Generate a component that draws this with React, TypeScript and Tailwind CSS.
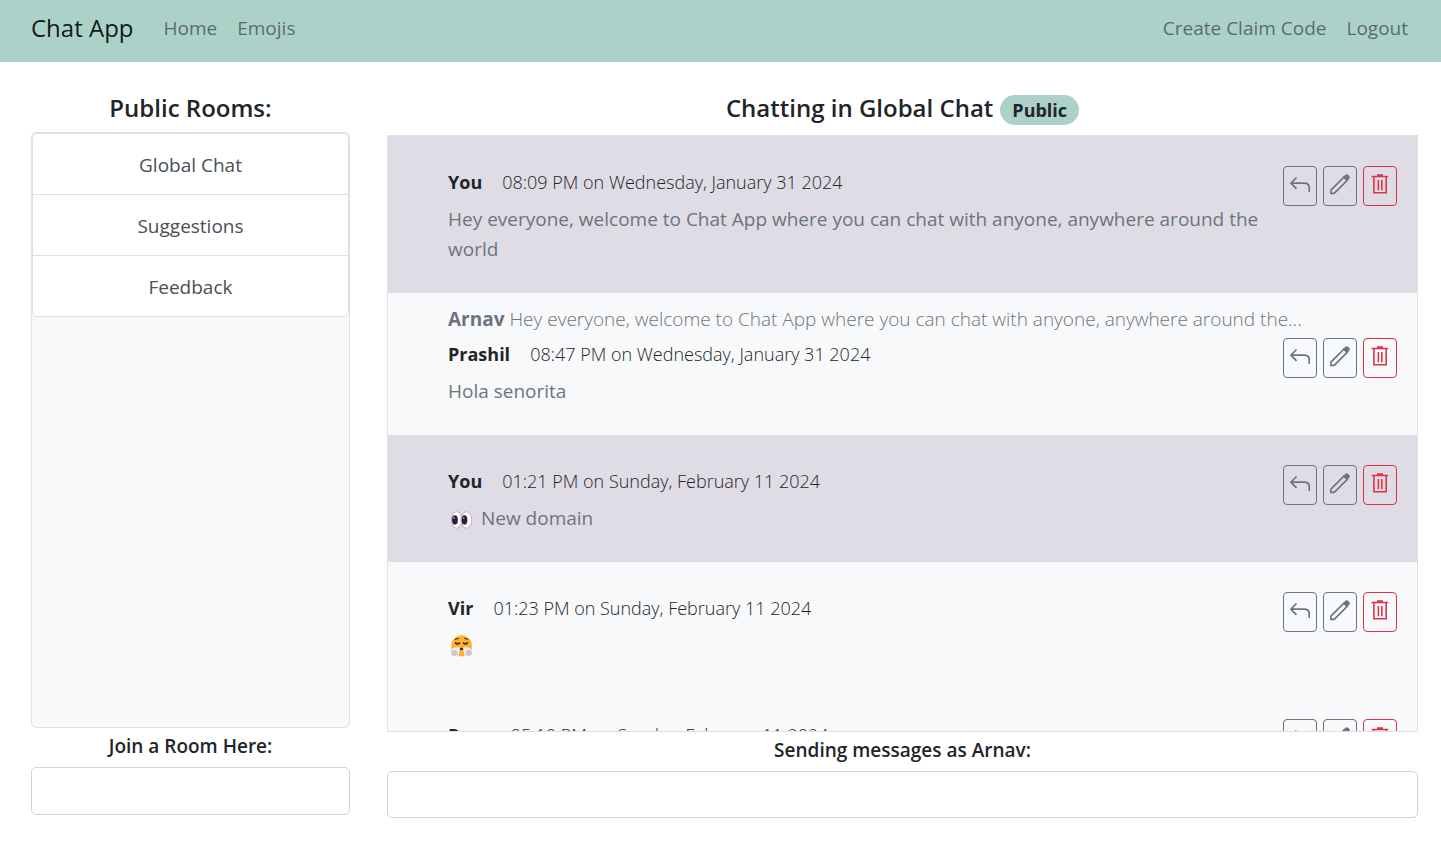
import { ReactNode } from "react";

type Message = {
  id: number;
  author: string;
  time: string;
  body: ReactNode;
  own?: boolean;
  reply?: { author: string; text: string };
};

function EyesEmoji() {
  return (
    <svg viewBox="0 0 24 24" className="mr-0.5 inline-block size-[26px] align-[-8px]" role="img" aria-label="eyes">
      <g fill="#fff" stroke="#b9b6bd" strokeWidth="1">
        <ellipse cx="8" cy="12" rx="4.900" ry="7.600" />
        <ellipse cx="17" cy="12" rx="5" ry="7.600" />
      </g>
      <ellipse cx="6.400" cy="12" rx="2.700" ry="4.300" fill="#321b41" />
      <ellipse cx="15.200" cy="12" rx="2.700" ry="4.300" fill="#321b41" />
      <circle cx="5.600" cy="10" r="0.800" fill="#b9a9cc" />
      <circle cx="14.400" cy="10" r="0.800" fill="#b9a9cc" />
    </svg>
  );
}

function HuffEmoji() {
  return (
    <svg viewBox="0 0 24 24" className="inline-block size-[26px] align-[-7px]" role="img" aria-label="face with steam from nose">
      <path d="M3 11.500a9.500 9.500 0 0 1 19 0v4c0 4-4 6-9.500 6S3 19.500 3 15.500z" fill="#ffb02e" />
      <g fill="none" stroke="#402a32" strokeWidth="1" strokeLinecap="round">
        <path d="M6.800 6.200c1-.9 2-1.200 3-1.100M15.200 5.100c1-.1 2 .2 3 1.100" />
        <path d="M7 9.200c1.200 1 2.400 1 3.600.2M14.400 9.400c1.200.8 2.400.8 3.600-.2" strokeWidth="1.600" />
      </g>
      <path d="M10.800 15.200q1.700-2 3.400 0z" fill="#402a32" stroke="#402a32" />
      <path d="M11 13.500C8 12.800 3 13 3 16.500c-.5 4 1.500 5.500 4 5 3 .3 3.500-1.500 3-3 1-1.500 1-3 1-5z" fill="#ededed" />
      <path d="M14 13.500c3-.7 8-.5 8 3 .5 4-1.500 5.500-4 5-3 .3-3.500-1.500-3-3-1-1.500-1-3-1-5z" fill="#ededed" />
      <circle cx="5.800" cy="18.500" r="2.800" fill="#c9c9c9" />
      <circle cx="19.200" cy="18.500" r="2.800" fill="#c9c9c9" />
    </svg>
  );
}

function ReplyIcon() {
  return (
    <svg viewBox="0 0 20 20" className="size-5" fill="none" stroke="currentColor" strokeWidth="1.700" aria-hidden="true">
      <path d="M6.500 2.500.900 8.200l5.600 5.600M.900 8.200h13.400q5 0 5 5V17" />
    </svg>
  );
}

function PencilIcon() {
  return (
    <svg viewBox="0 0 20 20" className="size-5 overflow-visible" aria-hidden="true">
      <path d="M.900 15.100 13.900 2.100l3.300 3.300-13 13H.900z" fill="none" stroke="currentColor" strokeWidth="1.600" />
      <path d="M13.500 2.100 15.500.2q1.500-1.100 3 .3t.4 3L17 5.600z" fill="currentColor" stroke="currentColor" />
    </svg>
  );
}

function TrashIcon() {
  return (
    <svg viewBox="0 0 20 20" className="size-5 overflow-visible" fill="none" stroke="currentColor" strokeWidth="1.600" aria-hidden="true">
      <path d="M1.600 1.500h16.600M7 .1h6M3.900 1.500v16.200h12.300V1.500M8.400 5v10.200M11.800 5v10.200" />
    </svg>
  );
}

const rooms = ["Global Chat", "Suggestions", "Feedback"];

const greeting = "Hey everyone, welcome to Chat App where you can chat with anyone, anywhere around the";

const messages: Message[] = [
  { id: 1, author: "You", time: "08:09 PM on Wednesday, January 31 2024", body: `${greeting} world`, own: true },
  {
    id: 2,
    author: "Prashil",
    time: "08:47 PM on Wednesday, January 31 2024",
    body: "Hola senorita",
    reply: { author: "Arnav", text: `${greeting}...` },
  },
  { id: 3, author: "You", time: "01:21 PM on Sunday, February 11 2024", body: <><EyesEmoji />{" "}New domain</>, own: true },
  { id: 4, author: "Vir", time: "01:23 PM on Sunday, February 11 2024", body: <HuffEmoji /> },
  { id: 5, author: "Rose", time: "05:10 PM on Sunday, February 11 2024", body: "Hello" },
];

const actionClass = "flex h-10 w-[34px] justify-center rounded border pt-2";

function MessageRow({ message }: { message: Message }) {
  const { author, time, body, own, reply } = message;
  return (
    <li className={`pr-5 pl-[60px] ${reply ? "pt-[11px]" : "pt-[30px]"} pb-[29px] ${own ? "bg-[#dfdce5]" : "bg-[#f8f9fa]"}`}>
      {reply && (
        <p className="mb-1 font-light whitespace-nowrap text-[#6c757d]">
          <b className="font-bold">{reply.author}</b> {reply.text}
        </p>
      )}
      <div className="flex items-start justify-between gap-6">
        <div className="min-w-0 pt-px">
          <p className="text-[18px] font-light">
            <b className="mr-5 font-bold">{author}</b>
            {time}
          </p>
          <p className="mt-[7px] min-h-[30px] text-[#6c757d]">{body}</p>
        </div>
        <div className="flex shrink-0 gap-1.5 text-[#6c757d]">
          <button type="button" aria-label="Reply" className={`${actionClass} border-[#6c757d]`}><ReplyIcon /></button>
          <button type="button" aria-label="Edit" className={`${actionClass} border-[#6c757d]`}><PencilIcon /></button>
          <button type="button" aria-label="Delete" className={`${actionClass} border-[#dc3545] text-[#dc3545]`}><TrashIcon /></button>
        </div>
      </div>
    </li>
  );
}

export default function App() {
  return (
    <div className="flex h-screen flex-col bg-white font-['Open_Sans','Noto_Sans',sans-serif] text-[19px] leading-[30px] text-[#212529]">
      <nav className="flex h-[62px] shrink-0 items-center bg-[#acd1c8] pr-[33px] pb-1.5 pl-[31px] text-black/50">
        <a href="#" className="mr-[30px] text-[24px] text-black/90">Chat App</a>
        <div className="flex flex-1 gap-5">
          <a href="#home">Home</a>
          <a href="#emojis">Emojis</a>
        </div>
        <div className="flex gap-5">
          <a href="#claim">Create Claim Code</a>
          <a href="#logout">Logout</a>
        </div>
      </nav>

      <main className="grid min-h-0 flex-1 grid-cols-[319fr_1031fr] gap-[37px] pt-7 pr-[23px] pb-[23px] pl-[31px]">
        <section className="flex min-h-0 flex-col pb-[3px]">
          <h2 className="mb-1.5 text-center text-[24px] leading-9 font-semibold">Public Rooms:</h2>
          <div className="min-h-0 flex-1 overflow-hidden rounded-[5px] border border-[#dee2e6] bg-[#f8f9fa]">
            <ul className="divide-y divide-[#dfdfdf] overflow-hidden rounded-[5px] border border-[#dfdfdf] bg-white text-center text-[#495057]">
              {rooms.map((room) => (
                <li key={room}>
                  <button type="button" className="h-[60px] w-full pt-0.5">{room}</button>
                </li>
              ))}
            </ul>
          </div>
          <label htmlFor="room" className="mt-[3px] mb-1.5 text-center font-semibold">Join a Room Here:</label>
          <input id="room" type="text" className="h-12 w-full rounded-[5px] border border-[#ced4da] px-4" />
        </section>

        <section className="flex min-h-0 flex-col">
          <h2 className="mb-[9px] flex items-center justify-center gap-[7px] text-[24px] leading-9 font-semibold">
            Chatting in Global Chat
            <span className="mt-[3px] rounded-full bg-[#acd1c8] px-3 text-[18px] leading-[30px] font-bold">Public</span>
          </h2>
          <ul className="min-h-0 flex-1 overflow-hidden border border-[#dee2e6] bg-[#f8f9fa]">
            {messages.map((message) => (
              <MessageRow key={message.id} message={message} />
            ))}
          </ul>
          <label htmlFor="message" className="mt-[3px] mb-1.5 text-center font-semibold">Sending messages as Arnav:</label>
          <input id="message" type="text" className="h-[47px] w-full rounded-[5px] border border-[#ced4da] px-4" />
        </section>
      </main>
    </div>
  );
}
